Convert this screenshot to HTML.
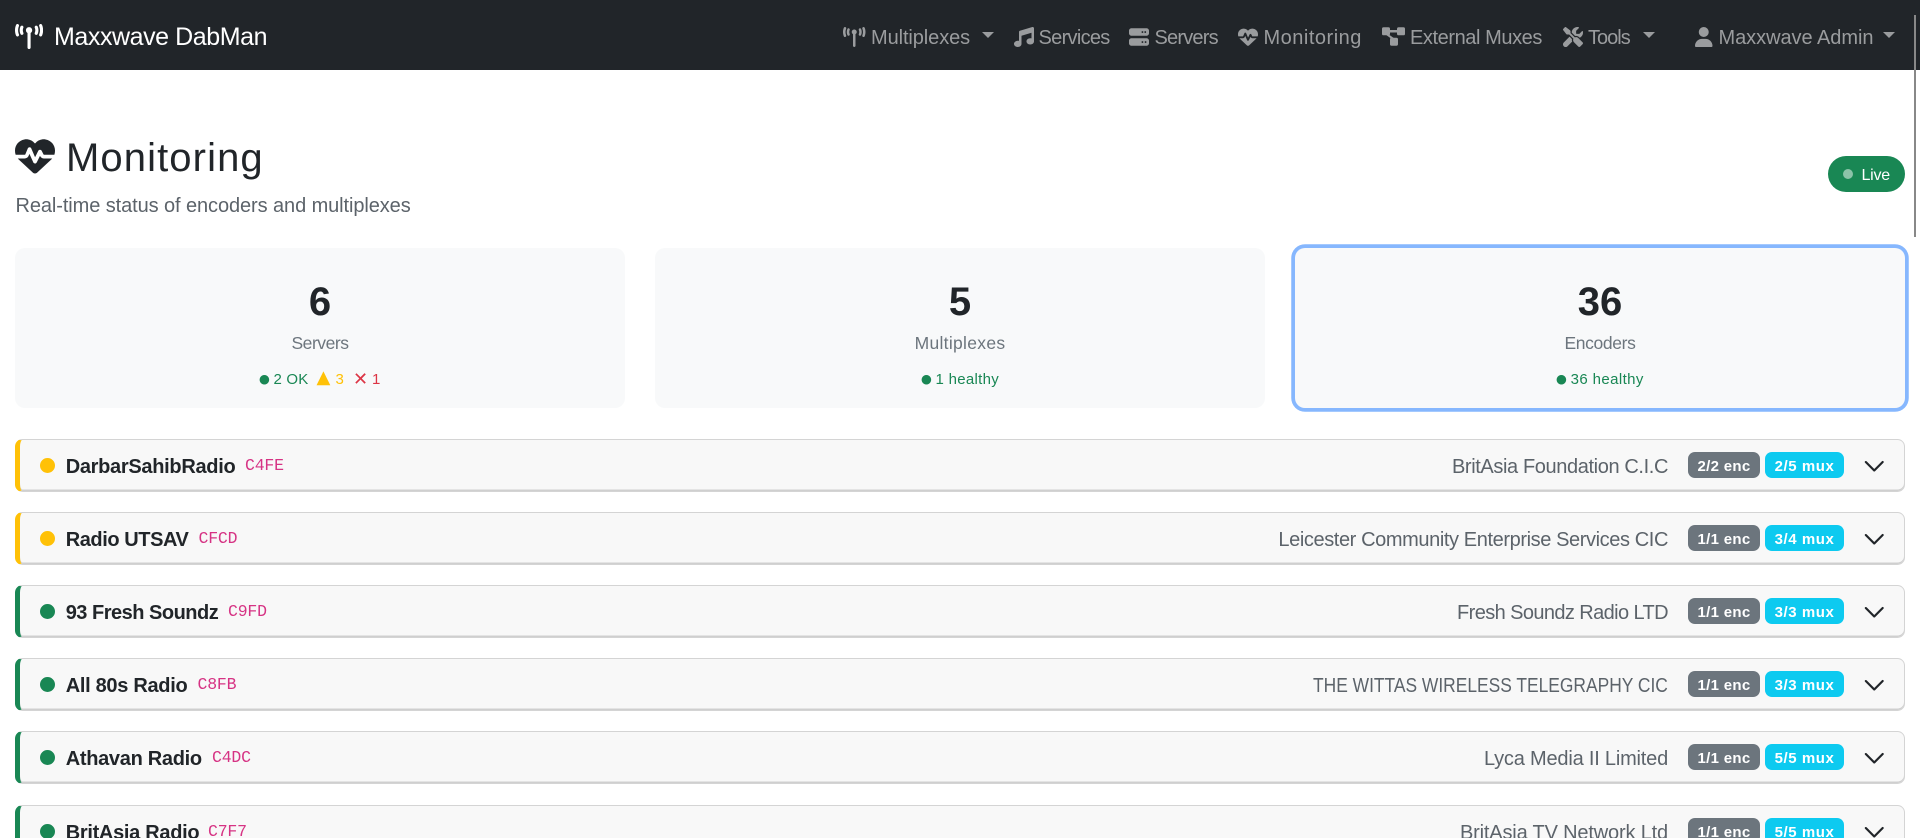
<!DOCTYPE html>
<html lang="en">
<head>
<meta charset="utf-8">
<title>Monitoring - Maxxwave DabMan</title>
<style>
*{box-sizing:border-box}
html,body{margin:0;padding:0;width:1920px;height:838px;overflow:hidden;background:#fff}
body{position:relative;font-family:"Liberation Sans",sans-serif;color:#212529}
.t{position:absolute;line-height:1;white-space:nowrap}
nav{position:absolute;left:0;top:0;width:1920px;height:70px;background:#212529}
nav .t{font-size:20px;top:28px;color:#9a9c9e}
nav svg{position:absolute;top:27px;height:20px;fill:#9a9c9e}
.caret{position:absolute;top:32px;width:0;height:0;border-left:6px solid transparent;border-right:6px solid transparent;border-top:6px solid #9a9c9e}
.sb{position:absolute;left:1914px;top:15px;width:2px;height:222px;background:#888}
.live{position:absolute;left:1828px;top:156px;width:77px;height:36px;border-radius:18px;background:#198754}
.live i{position:absolute;left:14.5px;top:13px;width:10px;height:10px;border-radius:50%;background:#8cc3a9}
.live span{position:absolute;left:33.5px;top:11.5px;font-size:16px;line-height:1;letter-spacing:-.25px;color:#fff}
.card{position:absolute;top:248px;width:610px;height:160px;border-radius:10px;background:#f8f9fa}
.card.sel{box-shadow:0 0 0 3.75px #86b7fe}
.num{position:absolute;top:282px;font-size:40px;font-weight:700;line-height:1;width:610px;text-align:center}
.lab{position:absolute;top:335.2px;font-size:17.5px;line-height:1;width:610px;text-align:center;color:#6c757d}
.st{position:absolute;top:372.3px;font-size:15px;line-height:1;white-space:nowrap}
.g{color:#198754}.y{color:#ffc107}.r{color:#dc3545}
.sym{font-family:"DejaVu Sans",sans-serif}
.row{position:absolute;left:15px;width:1890px;height:53px;background:#f8f8f8;border:1px solid #d4d4d4;border-left:5px solid #198754;border-radius:7.5px;box-shadow:inset 0 -1.5px 0 #cfcfcf}
.row.w{border-left-color:#ffc107}
.dot{position:absolute;left:20px;top:18px;width:15px;height:15px;border-radius:50%;background:#198754}
.w .dot{background:#ffc107}
.name{position:absolute;left:45.7px;top:17px;font-size:20px;line-height:1;font-weight:700;letter-spacing:-.3px;white-space:nowrap}
code{position:absolute;top:18.3px;font-family:"Liberation Mono",monospace;font-size:16.5px;line-height:1;letter-spacing:-.2px;color:#d63384}
.org{position:absolute;right:236px;top:17px;font-size:20px;line-height:1;white-space:nowrap;color:#5c636a}
.b{position:absolute;top:12px;height:26px;border-radius:7px;color:#fff;font-size:15px;font-weight:700;line-height:29px;text-align:center;white-space:nowrap}
.enc{left:1668px;width:72px;background:#6c757d;letter-spacing:.3px}
.mux{left:1745px;width:79px;background:#0dcaf0;letter-spacing:.55px}
.chev{position:absolute;left:1842.75px;top:15px;width:22.5px;height:22.5px;fill:#212529;stroke:#212529;stroke-width:.55}
</style>
</head>
<body>
<nav>
  <svg style="left:15px;top:24px;height:25px;fill:#fff" viewBox="0 0 576 512"><path d="M80.3 44C69.8 69.9 64 98.2 64 128s5.800 58.100 16.300 84c6.600 16.400-1.300 35-17.700 41.700s-35-1.300-41.700-17.700C7.400 202.600 0 166.100 0 128S7.400 53.400 20.900 20C27.600 3.600 46.200-4.300 62.600 2.300S86.900 27.600 80.300 44zM555.100 20C568.600 53.400 576 89.900 576 128s-7.400 74.600-20.900 108c-6.600 16.400-25.300 24.300-41.700 17.700S489.100 228.400 495.700 212c10.500-25.900 16.300-54.200 16.300-84s-5.800-58.100-16.300-84C489.100 27.600 497 9 513.400 2.300s35 1.300 41.700 17.700zM352 128c0 23.700-12.900 44.400-32 55.400V480c0 17.700-14.300 32-32 32s-32-14.300-32-32V183.400c-19.100-11.100-32-31.700-32-55.400c0-35.300 28.700-64 64-64s64 28.700 64 64zM170.600 76.800C163.800 92.400 160 109.700 160 128s3.800 35.600 10.600 51.200c7.100 16.200-.3 35.100-16.500 42.100s-35.100-.3-42.100-16.500c-10.300-23.600-16-49.600-16-76.800s5.700-53.200 16-76.800c7.100-16.200 25.900-23.600 42.100-16.500s23.600 25.900 16.500 42.100zM464 51.200c10.300 23.600 16 49.600 16 76.800s-5.700 53.200-16 76.800c-7.100 16.200-25.900 23.600-42.100 16.500s-23.600-25.900-16.500-42.100c6.800-15.600 10.600-32.900 10.600-51.200s-3.800-35.600-10.600-51.200c-7.100-16.200 .3-35.100 16.500-42.100s35.100 .3 42.100 16.500z"/></svg>
  <span class="t" style="left:54px;top:25px;font-size:25px;color:#fff;letter-spacing:-.43px">Maxxwave DabMan</span>

  <svg style="left:843px" viewBox="0 0 576 512"><path d="M80.3 44C69.8 69.9 64 98.2 64 128s5.800 58.100 16.300 84c6.600 16.400-1.300 35-17.700 41.700s-35-1.300-41.700-17.700C7.400 202.600 0 166.100 0 128S7.400 53.400 20.900 20C27.600 3.600 46.200-4.300 62.600 2.300S86.900 27.600 80.300 44zM555.100 20C568.600 53.400 576 89.900 576 128s-7.400 74.600-20.900 108c-6.600 16.400-25.300 24.300-41.700 17.700S489.100 228.400 495.700 212c10.500-25.900 16.300-54.200 16.300-84s-5.800-58.100-16.300-84C489.100 27.600 497 9 513.400 2.300s35 1.300 41.700 17.700zM352 128c0 23.700-12.900 44.400-32 55.400V480c0 17.700-14.300 32-32 32s-32-14.300-32-32V183.400c-19.100-11.100-32-31.700-32-55.400c0-35.300 28.700-64 64-64s64 28.700 64 64zM170.600 76.800C163.800 92.400 160 109.700 160 128s3.800 35.600 10.600 51.200c7.100 16.200-.3 35.100-16.500 42.100s-35.100-.3-42.100-16.500c-10.300-23.600-16-49.600-16-76.800s5.700-53.200 16-76.800c7.100-16.200 25.900-23.600 42.100-16.500s23.600 25.900 16.500 42.100zM464 51.200c10.300 23.600 16 49.600 16 76.800s-5.700 53.200-16 76.800c-7.100 16.200-25.900 23.600-42.100 16.500s-23.600-25.900-16.500-42.100c6.800-15.600 10.600-32.900 10.600-51.200s-3.800-35.600-10.600-51.200c-7.100-16.200 .3-35.100 16.500-42.100s35.100 .3 42.100 16.500z"/></svg>
  <span class="t" style="left:871px;letter-spacing:-.09px">Multiplexes</span>
  <i class="caret" style="left:982px"></i>

  <svg style="left:1014px" viewBox="0 0 512 512"><path d="M499.100 6.300c8.100 6 12.900 15.600 12.900 25.700v72V368c0 44.200-43 80-96 80s-96-35.800-96-80s43-80 96-80c11.200 0 22 1.600 32 4.600V147L192 223.800V432c0 44.200-43 80-96 80s-96-35.800-96-80s43-80 96-80c11.200 0 22 1.600 32 4.600V200 128c0-14.100 9.300-26.600 22.800-30.700l320-96c9.700-2.900 20.200-1.100 28.300 5z"/></svg>
  <span class="t" style="left:1038.500px;letter-spacing:-.7px">Services</span>

  <svg style="left:1129px" viewBox="0 0 512 512"><path d="M64 32C28.700 32 0 60.700 0 96v64c0 35.300 28.700 64 64 64H448c35.300 0 64-28.700 64-64V96c0-35.300-28.700-64-64-64H64zm280 72a24 24 0 1 1 0 48 24 24 0 1 1 0-48zm48 24a24 24 0 1 1 48 0 24 24 0 1 1 -48 0zM64 288c-35.300 0-64 28.700-64 64v64c0 35.300 28.700 64 64 64H448c35.300 0 64-28.700 64-64V352c0-35.300-28.700-64-64-64H64zm280 72a24 24 0 1 1 0 48 24 24 0 1 1 0-48zm56 24a24 24 0 1 1 48 0 24 24 0 1 1 -48 0z"/></svg>
  <span class="t" style="left:1154.500px;letter-spacing:-.8px">Servers</span>

  <svg style="left:1238px" viewBox="0 0 512 512"><path d="M228.300 469.100L47.600 300.400c-4.200-3.900-8.200-8.100-11.900-12.400h87c22.600 0 43-13.600 51.700-34.500l10.500-25.200 49.300 109.500c3.800 8.500 12.100 14 21.400 14.100s17.800-5 22-13.300L320 253.700l1.700 3.400c9.500 19 28.900 31 50.100 31H476.300c-3.700 4.300-7.700 8.500-11.900 12.400L283.700 469.100c-7.500 7-17.400 10.900-27.700 10.900s-20.200-3.900-27.700-10.900zM503.700 240h-132c-3 0-5.800-1.700-7.200-4.400l-23.200-46.300c-4.100-8.100-12.400-13.300-21.500-13.300s-17.400 5.100-21.500 13.300l-41.400 82.800L208 157.800c-3.900-8.700-12.700-14.300-22.200-14.100s-18.100 5.900-21.800 14.800l-31.800 76.300c-1.200 3-4.200 4.900-7.400 4.900H8.300C2.900 224.600 0 208 0 190.900v-5.800C0 115.200 50.500 55.600 119.400 44.100C165 36.500 211.400 51.400 244 84l12 12 12-12c32.600-32.600 79-47.500 124.600-39.900C461.500 55.600 512 115.200 512 185.100v5.800c0 17.100-2.900 33.700-8.300 49.100z"/></svg>
  <span class="t" style="left:1263.500px;letter-spacing:.5px">Monitoring</span>

  <svg style="left:1382px;height:19px;width:23px" viewBox="0 0 23 19"><rect x="0" y=".3" width="8" height="8" rx="1.6"/><rect x="15" y=".3" width="8" height="8" rx="1.6"/><rect x="8" y="10.700" width="8" height="8" rx="1.6"/><path d="M7 3h9v2.500H7zM3.500 7.500h3.300L12.500 11.500H9z"/></svg>
  <span class="t" style="left:1410px;letter-spacing:-.42px">External Muxes</span>

  <svg style="left:1562.500px" viewBox="0 0 512 512"><path d="M78.600 5C69.100-2.400 55.600-1.500 47 7L7 47c-8.500 8.500-9.400 22-2.100 31.600l80 104c4.500 5.900 11.600 9.400 19 9.400h54.100l109 109c-14.700 29-10 65.400 14.300 89.600l112 112c12.500 12.500 32.800 12.500 45.300 0l64-64c12.500-12.500 12.500-32.800 0-45.300l-112-112c-24.200-24.200-60.600-29-89.600-14.300l-109-109V104c0-7.500-3.500-14.500-9.400-19L78.600 5zM19.900 396.100C7.200 408.800 0 426.100 0 444.100C0 481.600 30.400 512 67.900 512c18 0 35.300-7.200 48-19.900L233.700 374.300c-7.800-20.900-9-43.600-3.600-65.100l-61.700-61.700L19.900 396.100zM512 144c0-10.500-1.100-20.700-3.200-30.500c-2.400-11.200-16.100-14.100-24.200-6l-63.900 63.900c-3 3-7.100 4.700-11.300 4.700H352c-8.800 0-16-7.200-16-16V102.600c0-4.200 1.700-8.300 4.700-11.300l63.900-63.900c8.100-8.100 5.200-21.800-6-24.200C388.700 1.100 378.500 0 368 0C288.500 0 224 64.500 224 144l0 .8 85.300 85.300c36-9.100 75.800 .5 104 28.700L429 274.500c49-23 83-72.800 83-130.500z"/></svg>
  <span class="t" style="left:1588px;letter-spacing:-1px">Tools</span>
  <i class="caret" style="left:1643px"></i>

  <svg style="left:1695px" viewBox="0 0 448 512"><path d="M224 256A128 128 0 1 0 224 0a128 128 0 1 0 0 256zm-45.700 48C79.800 304 0 383.800 0 482.300C0 498.700 13.300 512 29.700 512H418.300c16.400 0 29.700-13.300 29.700-29.700C448 383.800 368.200 304 269.700 304H178.300z"/></svg>
  <span class="t" style="left:1718.500px;letter-spacing:-.05px">Maxxwave Admin</span>
  <i class="caret" style="left:1883px"></i>
</nav>
<div class="sb"></div>

<svg style="position:absolute;left:15px;top:136px;width:40px;height:40px;fill:#212529" viewBox="0 0 512 512"><path d="M228.300 469.100L47.600 300.400c-4.200-3.900-8.200-8.100-11.900-12.400h87c22.600 0 43-13.600 51.700-34.500l10.500-25.200 49.300 109.500c3.800 8.500 12.100 14 21.400 14.100s17.800-5 22-13.300L320 253.700l1.700 3.400c9.500 19 28.900 31 50.100 31H476.300c-3.700 4.300-7.700 8.500-11.900 12.400L283.700 469.100c-7.500 7-17.400 10.900-27.700 10.900s-20.200-3.900-27.700-10.900zM503.700 240h-132c-3 0-5.800-1.700-7.200-4.400l-23.200-46.300c-4.100-8.100-12.400-13.300-21.500-13.300s-17.400 5.100-21.500 13.300l-41.400 82.800L208 157.800c-3.900-8.700-12.700-14.300-22.200-14.100s-18.100 5.900-21.800 14.800l-31.800 76.300c-1.200 3-4.200 4.900-7.400 4.900H8.300C2.900 224.600 0 208 0 190.900v-5.800C0 115.200 50.500 55.600 119.400 44.100C165 36.500 211.400 51.400 244 84l12 12 12-12c32.600-32.600 79-47.500 124.600-39.900C461.500 55.600 512 115.200 512 185.100v5.800c0 17.100-2.900 33.700-8.300 49.100z"/></svg>
<h1 class="t" style="left:66px;top:138.100px;margin:0;font-size:40px;font-weight:400;letter-spacing:1.1px">Monitoring</h1>
<p class="t" style="left:15.500px;top:196px;margin:0;font-size:20px;letter-spacing:-.09px;color:#5c636a">Real-time status of encoders and multiplexes</p>

<div class="live"><i></i><span>Live</span></div>

<div class="card" style="left:15px"></div>
<div class="card" style="left:655px"></div>
<div class="card sel" style="left:1295px"></div>

<div class="num" style="left:15px">6</div>
<div class="lab" style="left:15px;letter-spacing:-.47px">Servers</div>
<div class="st sym g" style="left:259px;top:372.500px;font-size:12.500px">●</div>
<div class="st g" style="left:273.500px;letter-spacing:.2px">2 OK</div>
<div class="st sym y" style="left:316.500px;top:369px;font-size:18px">▲</div>
<div class="st y" style="left:335.500px">3</div>
<div class="st sym r" style="left:353px;top:371px;font-size:18px">✕</div>
<div class="st r" style="left:372px">1</div>

<div class="num" style="left:655px">5</div>
<div class="lab" style="left:655px;letter-spacing:.3px">Multiplexes</div>
<div class="st sym g" style="left:921px;top:372.500px;font-size:12.500px">●</div>
<div class="st g" style="left:935.500px;letter-spacing:.3px">1 healthy</div>

<div class="num" style="left:1295px">36</div>
<div class="lab" style="left:1295px;letter-spacing:-.36px">Encoders</div>
<div class="st sym g" style="left:1556px;top:372.500px;font-size:12.500px">●</div>
<div class="st g" style="left:1570.600px;letter-spacing:.4px">36 healthy</div>

<div class="row w" style="top:439px"><i class="dot"></i><span class="name">DarbarSahibRadio</span><code style="left:225px">C4FE</code><span class="org" style="letter-spacing:-.385px">BritAsia Foundation C.I.C</span><span class="b enc">2/2 enc</span><span class="b mux">2/5 mux</span><svg class="chev" viewBox="0 0 16 16"><path fill-rule="evenodd" d="M1.646 4.646a.5.5 0 0 1 .708 0L8 10.293l5.646-5.647a.5.5 0 0 1 .708.708l-6 6a.5.5 0 0 1-.708 0l-6-6a.5.5 0 0 1 0-.708z"/></svg></div>

<div class="row w" style="top:512px"><i class="dot"></i><span class="name" style="letter-spacing:-.42px">Radio UTSAV</span><code style="left:178.500px">CFCD</code><span class="org" style="letter-spacing:-.4px">Leicester Community Enterprise Services CIC</span><span class="b enc">1/1 enc</span><span class="b mux">3/4 mux</span><svg class="chev" viewBox="0 0 16 16"><path fill-rule="evenodd" d="M1.646 4.646a.5.5 0 0 1 .708 0L8 10.293l5.646-5.647a.5.5 0 0 1 .708.708l-6 6a.5.5 0 0 1-.708 0l-6-6a.5.5 0 0 1 0-.708z"/></svg></div>

<div class="row" style="top:585px"><i class="dot"></i><span class="name" style="letter-spacing:-.5px">93 Fresh Soundz</span><code style="left:208px">C9FD</code><span class="org" style="letter-spacing:-.6px">Fresh Soundz Radio LTD</span><span class="b enc">1/1 enc</span><span class="b mux">3/3 mux</span><svg class="chev" viewBox="0 0 16 16"><path fill-rule="evenodd" d="M1.646 4.646a.5.5 0 0 1 .708 0L8 10.293l5.646-5.647a.5.5 0 0 1 .708.708l-6 6a.5.5 0 0 1-.708 0l-6-6a.5.5 0 0 1 0-.708z"/></svg></div>

<div class="row" style="top:658px"><i class="dot"></i><span class="name">All 80s Radio</span><code style="left:177.500px">C8FB</code><span class="org" style="transform:scaleX(.87);transform-origin:right center">THE WITTAS WIRELESS TELEGRAPHY CIC</span><span class="b enc">1/1 enc</span><span class="b mux">3/3 mux</span><svg class="chev" viewBox="0 0 16 16"><path fill-rule="evenodd" d="M1.646 4.646a.5.5 0 0 1 .708 0L8 10.293l5.646-5.647a.5.5 0 0 1 .708.708l-6 6a.5.5 0 0 1-.708 0l-6-6a.5.5 0 0 1 0-.708z"/></svg></div>

<div class="row" style="top:731px"><i class="dot"></i><span class="name">Athavan Radio</span><code style="left:192px">C4DC</code><span class="org" style="letter-spacing:-.2px">Lyca Media II Limited</span><span class="b enc">1/1 enc</span><span class="b mux">5/5 mux</span><svg class="chev" viewBox="0 0 16 16"><path fill-rule="evenodd" d="M1.646 4.646a.5.5 0 0 1 .708 0L8 10.293l5.646-5.647a.5.5 0 0 1 .708.708l-6 6a.5.5 0 0 1-.708 0l-6-6a.5.5 0 0 1 0-.708z"/></svg></div>

<div class="row" style="top:804.500px"><i class="dot"></i><span class="name">BritAsia Radio</span><code style="left:188px">C7F7</code><span class="org" style="letter-spacing:-.17px">BritAsia TV Network Ltd</span><span class="b enc">1/1 enc</span><span class="b mux">5/5 mux</span><svg class="chev" viewBox="0 0 16 16"><path fill-rule="evenodd" d="M1.646 4.646a.5.5 0 0 1 .708 0L8 10.293l5.646-5.647a.5.5 0 0 1 .708.708l-6 6a.5.5 0 0 1-.708 0l-6-6a.5.5 0 0 1 0-.708z"/></svg></div>
</body>
</html>
